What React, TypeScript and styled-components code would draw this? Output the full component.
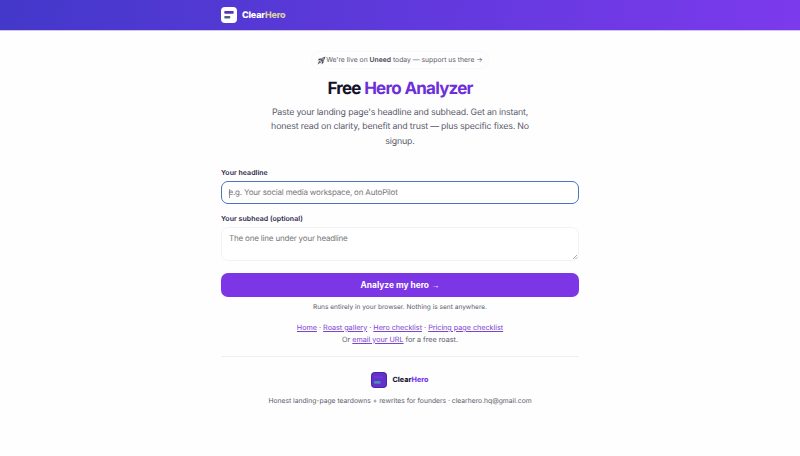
import styled, { createGlobalStyle } from "styled-components";

const GlobalStyle = createGlobalStyle`
    * {
        box-sizing: border-box;
    }
    body {
        margin: 0;
        background: #fefefe;
        color: #5b5b6b;
        font-family: Inter, "Liberation Sans", sans-serif;
        text-rendering: geometricPrecision;
    }
    h1, p {
        margin: 0;
    }
`;

const Header = styled.header`
    height: 30px;
    background: linear-gradient(100deg, #4338ca 0%, #7c3aed 100%);
    box-shadow: 0 1px 0 rgba(76, 29, 149, 0.25);
`;

const Container = styled.div`
    width: 358px;
    margin: 0 auto;
`;

const HeaderInner = styled(Container)`
    height: 100%;
    display: flex;
    align-items: center;
    gap: 5px;
`;

const Brand = styled.span<{ $light?: boolean }>`
    padding-top: 1px;
    font-size: ${({ $light }) => ($light ? "9px" : "7.2px")};
    font-weight: 800;
    letter-spacing: ${({ $light }) => ($light ? "-0.2px" : "0")};
    color: ${({ $light }) => ($light ? "#fff" : "#1e1b3a")};
    span {
        color: ${({ $light }) => ($light ? "#d9cfa5" : "#7c3aed")};
    }
`;

const Main = styled(Container).attrs({ as: "main" })`
    padding-top: 21px;
    display: flex;
    flex-direction: column;
    align-items: center;
    text-align: center;
`;

const Badge = styled.div`
    height: 18px;
    padding: 0 5px;
    border: 1px solid #fafafc;
    border-radius: 9px;
    display: flex;
    align-items: center;
    font-size: 6.8px;
    line-height: 10px;
    white-space: nowrap;
    b {
        font-weight: 600;
        color: #45455a;
    }
`;

const Title = styled.h1`
    margin-top: 9px;
    font-size: 17px;
    line-height: 22px;
    font-weight: 700;
    letter-spacing: -0.8px;
    word-spacing: 0.4px;
    color: #14122b;
    span {
        color: #6d2fd9;
    }
`;

const Lead = styled.p`
    width: 268px;
    margin-top: 6px;
    font-size: 8.8px;
    line-height: 14.3px;
    letter-spacing: -0.17px;
`;

const Form = styled.form`
    width: 100%;
    margin-top: 19px;
    display: flex;
    flex-direction: column;
    text-align: left;
`;

const Label = styled.label`
    font-size: 7px;
    line-height: 10px;
    font-weight: 600;
    letter-spacing: 0.03px;
    color: #2a2745;
`;

const Field = styled.div<{ $focused?: boolean }>`
    height: ${({ $focused }) => ($focused ? "23px" : "34px")};
    margin: ${({ $focused }) => ($focused ? "3px 0 10px" : "3px 0 12px")};
    padding: ${({ $focused }) => ($focused ? "1px 6.5px 0" : "5px 7px 6px")};
    border: ${({ $focused }) => ($focused ? "1.5px solid #4b74bd" : "1px solid #f2f2f6")};
    border-radius: 7px;
    background: #fff;
    display: flex;
    align-items: ${({ $focused }) => ($focused ? "center" : "flex-start")};
    justify-content: space-between;
    font-size: 8px;
    line-height: 11px;
    letter-spacing: -0.18px;
    color: #777;
`;

const Caret = styled.span`
    display: inline-block;
    width: 1px;
    height: 9px;
    margin-right: -1px;
    vertical-align: middle;
    background: #999;
`;

const Grip = styled.svg`
    align-self: flex-end;
    margin: 0 -7px -6px 0;
`;

const SubmitButton = styled.button`
    height: 24px;
    border: none;
    border-radius: 7px;
    padding: 0;
    background: #7c36e6;
    color: #fff;
    font: 700 8.4px/24px Inter, "Liberation Sans", sans-serif;
    span {
        font-family: "Liberation Sans", sans-serif;
    }
`;

const Note = styled.p`
    margin-top: 5px;
    font-size: 6.55px;
    line-height: 10px;
`;

const Links = styled.nav`
    margin-top: 10px;
    font-size: 7.2px;
    line-height: 12px;
    a {
        color: #7c45d0;
        text-decoration: underline;
    }
`;

const Footer = styled.footer`
    width: 100%;
    margin-top: 10px;
    padding-top: 15px;
    border-top: 1px solid #f0f0f4;
    font-size: 6.75px;
    line-height: 10px;
`;

const FooterBrand = styled.div`
    display: flex;
    align-items: center;
    justify-content: center;
    gap: 5px;
    height: 16px;
    margin-bottom: 8px;
`;

function Rocket() {
    return (
        <svg width="9" height="9" viewBox="0 0 18 18">
            <path d="M6 8Q10 2 17 1Q16 8 10 12Z" fill="#555762" />
            <path d="M6 8L1 9L5 5L9 5ZM10 12L9 17L13 13L13 9Z" fill="#393b46" />
            <path d="M5 9L9 13L6 14L1 17L3 12Z" fill="#686973" />
            <circle cx="12" cy="6" r="1.6" fill="#cbd0d8" />
        </svg>
    );
}

export default function App() {
    return (
        <>
            <GlobalStyle />
            <Header>
                <HeaderInner>
                    <svg width="16" height="16" viewBox="0 0 16 16">
                        <rect width="16" height="16" rx="4" fill="#fff" />
                        <rect x="3.3" y="4" width="9.4" height="2.8" rx="0.8" fill="#6030b5" />
                        <rect x="3.3" y="9" width="6" height="2.6" rx="0.8" fill="#466383" />
                    </svg>
                    <Brand $light>Clear<span>Hero</span></Brand>
                </HeaderInner>
            </Header>
            <Main>
                <Badge>
                    <Rocket />
                    <span>We're live on <b>Uneed</b> today — support us there →</span>
                </Badge>
                <Title>Free <span>Hero Analyzer</span></Title>
                <Lead>
                    Paste your landing page's headline and subhead. Get an instant, honest read on clarity,
                    benefit and trust — plus specific fixes. No signup.
                </Lead>
                <Form>
                    <Label>Your headline</Label>
                    <Field $focused>
                        <span><Caret />e.g. Your social media workspace, on AutoPilot</span>
                    </Field>
                    <Label>Your subhead (optional)</Label>
                    <Field>
                        <span>The one line under your headline</span>
                        <Grip width="6" height="6" viewBox="0 0 6 6">
                            <path d="M1 5L5 1M3.5 5L5 3.5" stroke="#888" strokeWidth="0.7" />
                        </Grip>
                    </Field>
                    <SubmitButton type="button">Analyze my hero <span>→</span></SubmitButton>
                </Form>
                <Note>Runs entirely in your browser. Nothing is sent anywhere.</Note>
                <Links>
                    <a>Home</a> · <a>Roast gallery</a> · <a>Hero checklist</a> · <a>Pricing page checklist</a>
                    <br />
                    Or <a>email your URL</a> for a free roast.
                </Links>
                <Footer>
                    <FooterBrand>
                        <svg width="16" height="16" viewBox="0 0 16 16">
                            <rect width="16" height="16" rx="4" fill="#4a24a8" />
                            <rect x="1" y="1" width="14" height="14" rx="3" fill="#6331ca" />
                            <rect x="3" y="4" width="9" height="2.5" rx="0.8" fill="#6c37d4" />
                            <rect x="3" y="9" width="6.5" height="2.7" rx="0.8" fill="#4a8bb8" />
                        </svg>
                        <Brand>Clear<span>Hero</span></Brand>
                    </FooterBrand>
                    <p>Honest landing-page teardowns + rewrites for founders · clearhero.hq@gmail.com</p>
                </Footer>
            </Main>
        </>
    );
}
